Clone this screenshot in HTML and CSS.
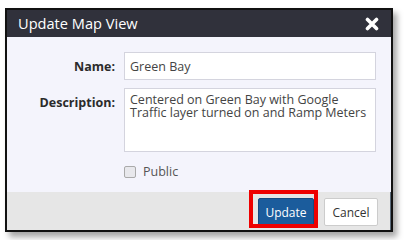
FILE: index.html
```html
<!DOCTYPE html>
<html lang="en">
<head>
  <meta charset="UTF-8">
  <title>Update Map View</title>
  <link rel="stylesheet" href="styles.css">
</head>
<body>
  <div class="dialog">
    <div class="dialog-header">
      <span class="dialog-title">Update Map View</span>
      <svg class="close" width="14" height="14" viewBox="0 0 14 14">
        <path d="M2.5 2.5 L11.5 11.5 M11.5 2.5 L2.5 11.5" stroke="#fff" stroke-width="3.6" stroke-linecap="round"/>
      </svg>
    </div>
    <div class="dialog-body">
      <label class="field-label" for="name">Name:</label>
      <input id="name" class="field-input" type="text" value="Green Bay">
      <label class="field-label" for="desc">Description:</label>
      <textarea id="desc" class="field-input field-area">Centered on Green Bay with Google Traffic layer turned on and Ramp Meters</textarea>
      <span></span>
      <label class="check-row"><span class="check-box"></span>Public</label>
    </div>
    <div class="dialog-footer">
      <span class="btn-wrap">
        <button class="btn btn-primary">Update</button>
        <span class="highlight"></span>
      </span>
      <button class="btn btn-default">Cancel</button>
    </div>
  </div>
</body>
</html>
```

FILE: styles.css
```css
body {
  margin: 0;
  padding: 8px 12px 8px 5px;
  background-color: #fff;
  font-family: "Open Sans", "Noto Sans", sans-serif;
  color: #333;
}

.dialog {
  width: 384px;
  border: 2px solid #111;
  background-color: #f4f4fc;
  box-shadow: 4px 5px 6px rgba(0,0,0,0.35);
}

.dialog-header {
  height: 27px;
  background-color: #30313b;
  color: #fff;
  display: flex;
  align-items: center;
  justify-content: space-between;
  padding: 0 12px 0 11px;
}

.dialog-title {
  font-size: 14.6px;
  margin-top: -2px;
}

.dialog-body {
  display: grid;
  grid-template-columns: 108px 252px;
  column-gap: 9px;
  row-gap: 5px;
  padding: 15px 0 10px 0;
  height: 130px;
}

.field-label {
  font-size: 12.5px;
  font-weight: bold;
  text-align: right;
  padding-top: 6px;
  color: #2b2b2b;
}

.field-input {
  box-sizing: border-box;
  height: 28px;
  border: 1px solid #d4d4de;
  background-color: #fff;
  font-family: inherit;
  font-size: 12.5px;
  color: #444;
  padding: 0 5px;
  margin: 0;
}

.field-area {
  height: 64px;
  padding: 4px 2px 4px 5px;
  line-height: 13px;
  resize: none;
  overflow: hidden;
}

.check-row {
  display: flex;
  align-items: center;
  gap: 7px;
  font-size: 12.5px;
  color: #555;
  padding-top: 1px;
}

.check-box {
  box-sizing: border-box;
  width: 12px;
  height: 12px;
  border: 1px solid #aaa;
  border-radius: 2px;
  background-color: #e8e8ec;
}

.dialog-footer {
  height: 38px;
  background-color: #e6e6e6;
  display: flex;
  align-items: center;
  justify-content: flex-end;
  gap: 10px;
  padding-right: 12px;
  border-right: 1px solid #5b6b7b;
}

.btn-wrap {
  position: relative;
  display: flex;
}

.btn {
  height: 28px;
  font-family: inherit;
  font-size: 12px;
  border-radius: 2px;
  padding: 0;
  margin-top: 2px;
}

.btn-primary {
  width: 56px;
  background-color: #1b5c9c;
  border: 1px solid #154a80;
  color: #fff;
}

.btn-default {
  width: 54px;
  background-color: #fff;
  border: 1px solid #ccc;
  color: #333;
}

.highlight {
  position: absolute;
  left: -9px;
  top: -6px;
  width: 61px;
  height: 30px;
  border: 4px solid #ee0000;
}
```
